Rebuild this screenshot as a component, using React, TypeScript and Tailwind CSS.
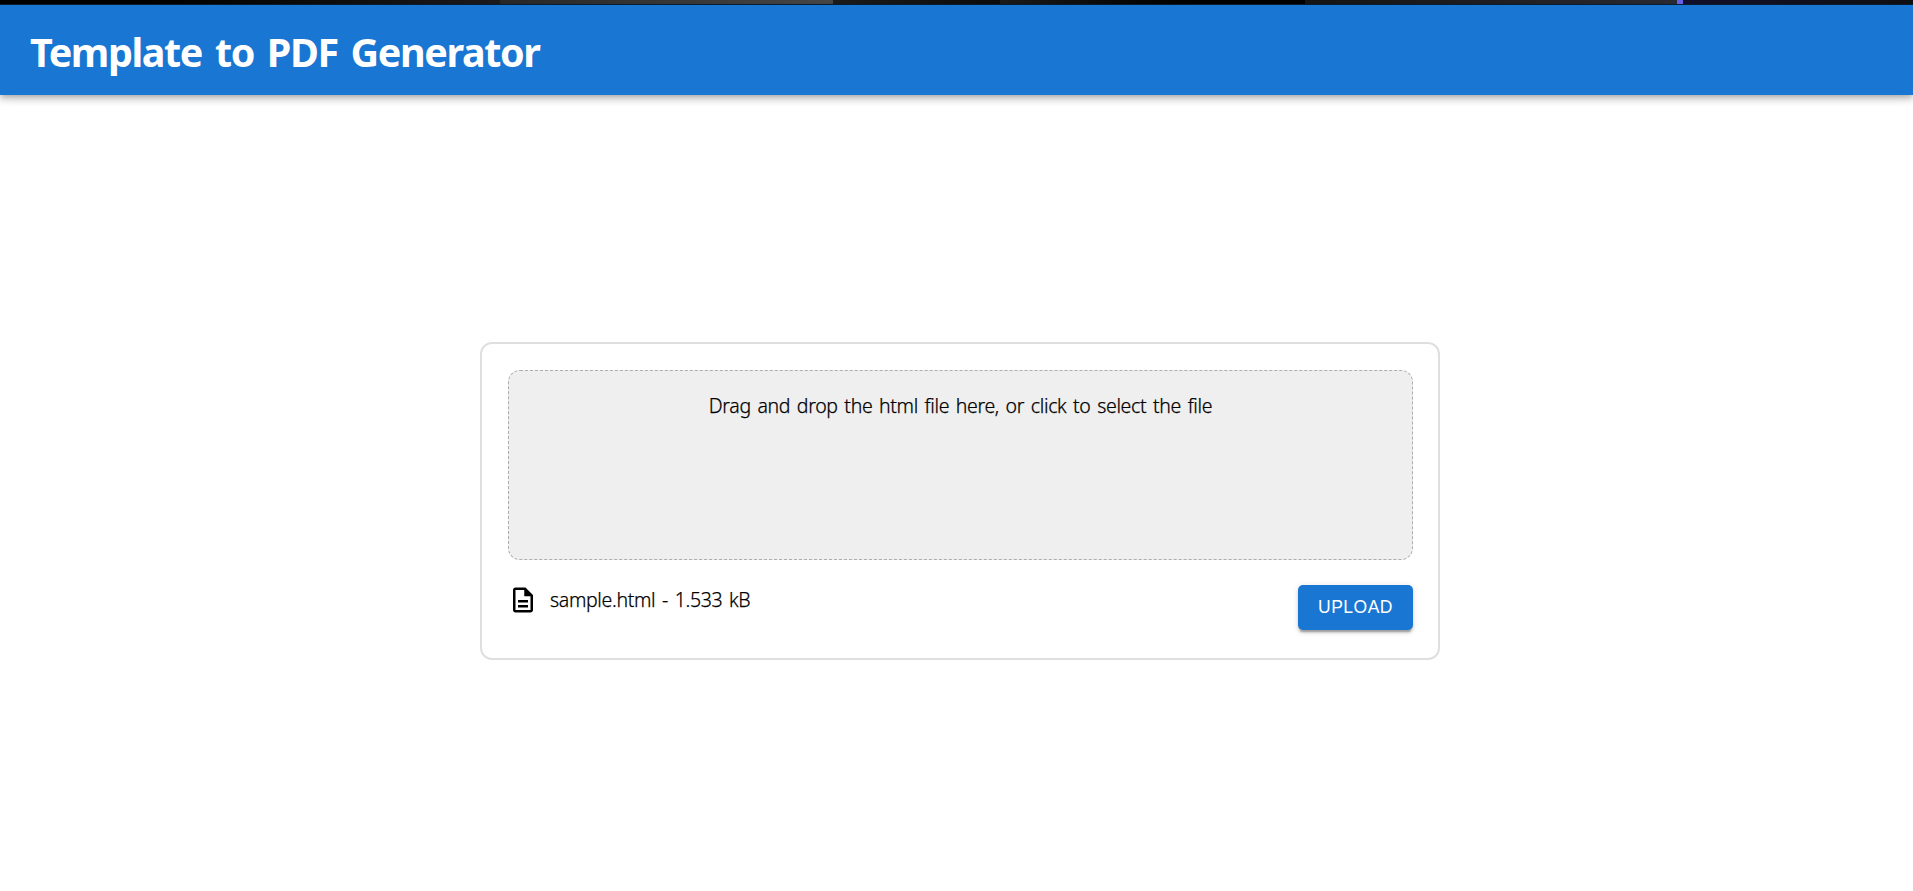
import React from "react";

function BrowserStrip() {
  return (
    <div className="flex h-[5px] w-full flex-none border-b border-[#0d2033] bg-[#0c0c0d]">
      <div className="w-[500px] bg-linear-to-r from-black via-[#080808] to-[#1c1a1d]" />
      <div className="w-[333px] bg-linear-to-r from-[#292929] to-[#484848]" />
      <div className="w-[167px] bg-linear-to-r from-[#1c1c1c] to-[#0c0c0c]" />
      <div className="w-[305px] bg-linear-to-r from-[#1c1c1c] to-black" />
      <div className="w-[372px] bg-linear-to-r from-[#151515] to-[#2b2b33]" />
      <div className="w-[6px] bg-[#6a63ee]" />
      <div className="flex-1 bg-linear-to-r from-[#130f2c] to-[#101012]" />
    </div>
  );
}

function FileIcon() {
  return (
    <svg viewBox="0 0 24 24" className="size-[30px] flex-none fill-black" aria-hidden="true">
      <path d="M8 16h8v2H8zm0-4h8v2H8zm6-10H6c-1.1 0-2 .9-2 2v16c0 1.1.89 2 1.99 2H18c1.1 0 2-.9 2-2V8zm4 18H6V4h7v5h5z" />
    </svg>
  );
}

export default function App() {
  return (
    <div className="flex h-[891px] flex-col overflow-hidden bg-white font-['Noto_Sans',sans-serif] text-black">
      <BrowserStrip />
      <header className="flex h-[90px] flex-none items-center bg-[#1976d2] pt-[3px] pl-[30px] shadow-[0px_2.5px_5px_-1.25px_rgba(0,0,0,0.2),0px_5px_6.25px_0px_rgba(0,0,0,0.14),0px_1.25px_12.5px_0px_rgba(0,0,0,0.12)]">
        <h1 className="text-[39.5px] leading-[50px] font-bold tracking-[-1.4px] text-white [word-spacing:4px]">Template to PDF Generator</h1>
      </header>
      <main className="flex flex-col items-center pt-[247px] pl-[7px]">
        <section className="flex h-[318px] w-[960px] flex-col rounded-xl border-2 border-[#dfdfdf] pt-[26px] pr-[25px] pl-[26px]">
          <div className="h-[190px] rounded-[12px] border border-dashed border-[#adadad] bg-[#efefef] pt-[20px] text-center text-[19.5px] leading-[30px] font-light tracking-[-0.34px] [-webkit-text-stroke:0.25px_black] [word-spacing:1.95px]">
            Drag and drop the html file here, or click to select the file
          </div>
          <div className="mt-[25px] flex items-start justify-between">
            <div className="flex items-center gap-[12px]">
              <FileIcon />
              <span className="text-[19.5px] leading-[30px] font-light tracking-[-0.34px] [-webkit-text-stroke:0.25px_black] [word-spacing:2px]">sample.html - 1.533 kB</span>
            </div>
            <button className="h-[45px] w-[115px] rounded-[5px] bg-[#1976d2] pb-px font-['Liberation_Sans',sans-serif] text-[17.5px] leading-[30px] font-medium tracking-[0.5px] text-white shadow-[0px_3.75px_1.25px_-2.5px_rgba(0,0,0,0.2),0px_2.5px_2.5px_0px_rgba(0,0,0,0.14),0px_1.25px_6.25px_0px_rgba(0,0,0,0.12)]">
              UPLOAD
            </button>
          </div>
        </section>
      </main>
    </div>
  );
}
